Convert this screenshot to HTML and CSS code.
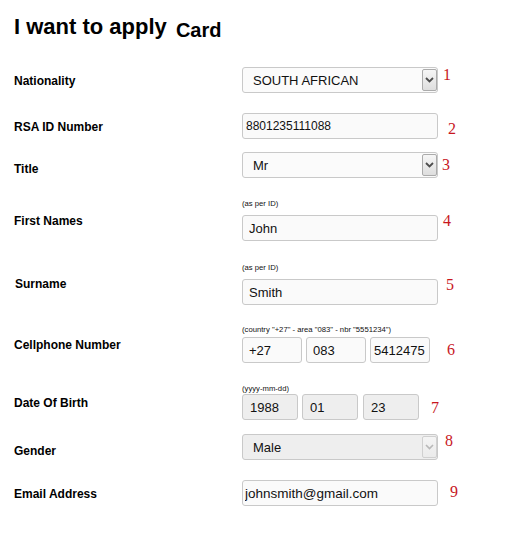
FILE: index.html
```html
<!DOCTYPE html>
<html lang="en">
<head>
<meta charset="utf-8">
<title>I want to apply Card</title>
<link rel="stylesheet" href="styles.css">
</head>
<body>
<div class="page">
  <h1 class="title">I want to apply <span class="sub">Card</span></h1>

  <div class="row r1">
    <div class="label p7">Nationality</div>
    <div class="field">
      <div class="line">
        <div class="select">
          <select class="native"><option>SOUTH AFRICAN</option></select>
          <span class="arrow"><svg width="9" height="6" viewBox="0 0 9 6"><path d="M1 1 L4.5 4.5 L8 1" fill="none" stroke="#4d4d4d" stroke-width="1.8"/></svg></span>
        </div>
        <span class="num n1">1</span>
      </div>
    </div>
  </div>

  <div class="row r2">
    <div class="label p7">RSA ID Number</div>
    <div class="field">
      <div class="line">
        <input class="text wide id" type="text" value="8801235111088">
        <span class="num n2">2</span>
      </div>
    </div>
  </div>

  <div class="row r3">
    <div class="label p10">Title</div>
    <div class="field">
      <div class="line">
        <div class="select">
          <select class="native"><option>Mr</option></select>
          <span class="arrow"><svg width="9" height="6" viewBox="0 0 9 6"><path d="M1 1 L4.5 4.5 L8 1" fill="none" stroke="#4d4d4d" stroke-width="1.8"/></svg></span>
        </div>
        <span class="num n3">3</span>
      </div>
    </div>
  </div>

  <div class="row r4">
    <div class="label p15">First Names</div>
    <div class="field">
      <div class="hint gap6">(as per ID)</div>
      <div class="line">
        <input class="text wide name" type="text" value="John">
        <span class="num n4">4</span>
      </div>
    </div>
  </div>

  <div class="row r5">
    <div class="label p14 shift">Surname</div>
    <div class="field">
      <div class="hint gap6">(as per ID)</div>
      <div class="line">
        <input class="text wide name" type="text" value="Smith">
        <span class="num n5">5</span>
      </div>
    </div>
  </div>

  <div class="row r6">
    <div class="label p13">Cellphone Number</div>
    <div class="field">
      <div class="hint gap2">(country "+27" - area "083" - nbr "5551234")</div>
      <div class="line">
        <div class="group">
          <input class="text part phone" type="text" value="+27">
          <input class="text part phone" type="text" value="083">
          <input class="text part phone last" type="text" value="5412475">
        </div>
        <span class="num n6">6</span>
      </div>
    </div>
  </div>

  <div class="row r7">
    <div class="label p12">Date Of Birth</div>
    <div class="field">
      <div class="hint">(yyyy-mm-dd)</div>
      <div class="line">
        <div class="group">
          <input class="text part date" type="text" value="1988" readonly>
          <input class="text part date" type="text" value="01" readonly>
          <input class="text part date" type="text" value="23" readonly>
        </div>
        <span class="num n7">7</span>
      </div>
    </div>
  </div>

  <div class="row r8">
    <div class="label p10">Gender</div>
    <div class="field">
      <div class="line">
        <div class="select disabled">
          <select class="native" disabled><option>Male</option></select>
          <span class="arrow"><svg width="9" height="6" viewBox="0 0 9 6"><path d="M1 1 L4.5 4.5 L8 1" fill="none" stroke="#b8b8b8" stroke-width="1.6"/></svg></span>
        </div>
        <span class="num n8">8</span>
      </div>
    </div>
  </div>

  <div class="row r9">
    <div class="label p7">Email Address</div>
    <div class="field">
      <div class="line">
        <input class="text wide email" type="text" value="johnsmith@gmail.com">
        <span class="num n9">9</span>
      </div>
    </div>
  </div>
</div>
</body>
</html>
```

FILE: styles.css
```css
html, body {
  margin: 0;
  padding: 0;
  background: #ffffff;
}

.page {
  padding: 14px 0 0 14px;
  font-family: "Liberation Sans", Arial, sans-serif;
  color: #000;
}

.title {
  margin: 0;
  height: 26px;
  font-size: 22px;
  line-height: 26px;
  font-weight: bold;
  white-space: nowrap;
}

.title .sub {
  margin-left: 3px;
  font-size: 20px;
  line-height: 20px;
  vertical-align: -3px;
}

.row {
  display: flex;
  align-items: flex-start;
}

.r1 { margin-top: 27px; }
.r2 { margin-top: 20px; }
.r3 { margin-top: 13px; }
.r4 { margin-top: 21px; }
.r5 { margin-top: 22px; }
.r6 { margin-top: 20px; }
.r7 { margin-top: 21px; }
.r8 { margin-top: 14px; }
.r9 { margin-top: 20px; }

.label {
  flex: none;
  width: 228px;
  font-size: 12px;
  line-height: 14px;
  font-weight: bold;
}

.p7 { padding-top: 7px; }
.p10 { padding-top: 10px; }
.p12 { padding-top: 12px; }
.p13 { padding-top: 13px; }
.p14 { padding-top: 14px; }
.p15 { padding-top: 15px; }
.shift { padding-left: 1px; width: 227px; }

.field {
  display: flex;
  flex-direction: column;
}

.hint {
  font-size: 7.7px;
  line-height: 10px;
  height: 10px;
  white-space: nowrap;
  color: #111;
}

.gap6 { margin-bottom: 6px; }
.gap2 { margin-bottom: 2px; }

.line {
  display: flex;
  align-items: flex-start;
}

.text {
  box-sizing: border-box;
  height: 26px;
  margin: 0;
  border: 1px solid #c9c9c9;
  border-radius: 3px;
  background: #fafafa;
  font-family: "Liberation Sans", Arial, sans-serif;
  font-size: 13px;
  color: #111;
  outline: none;
}

.wide { width: 196px; }
.id { padding: 0 3px; font-size: 12px; }
.name { padding: 0 6px; }
.email { padding: 0 2px; font-size: 13.5px; }

.group {
  display: flex;
  gap: 4px;
}

.part { padding: 0 6px; }
.phone { width: 60px; }
.phone.last { padding: 0 3px; }
.date {
  width: 56px;
  padding: 0 7px;
  background: #eeeeee;
}
.date + .date + .date { margin-left: 1px; }

.select {
  box-sizing: border-box;
  display: flex;
  align-items: stretch;
  width: 196px;
  height: 26px;
  border: 1px solid #c9c9c9;
  border-radius: 3px;
  background: #fbfbfb;
}

.select.disabled {
  background: #eeeeee;
}

.native {
  flex: 1;
  min-width: 0;
  margin: 0;
  padding: 0 0 0 10px;
  border: none;
  background: transparent;
  -webkit-appearance: none;
  appearance: none;
  font-family: "Liberation Sans", Arial, sans-serif;
  font-size: 13px;
  color: #111;
  outline: none;
  opacity: 1;
}

.native:disabled {
  color: #111;
}

.arrow {
  flex: none;
  box-sizing: border-box;
  width: 15px;
  margin: 1px 0 1px 0;
  border: 1px solid #ababab;
  border-radius: 2px;
  background: linear-gradient(#f6f6f6, #dedede);
  display: flex;
  align-items: center;
  justify-content: center;
}

.disabled .arrow {
  border-color: #d0d0d0;
  background: linear-gradient(#f4f4f4, #ebebeb);
}

.num {
  font-family: "Liberation Serif", "Times New Roman", serif;
  font-size: 16px;
  line-height: 16px;
  color: #c8171e;
}

.n1 { margin: 0 0 0 5px; }
.n2 { margin: 8px 0 0 10px; }
.n3 { margin: 5px 0 0 4px; }
.n4 { margin: -2px 0 0 5px; }
.n5 { margin: -2px 0 0 8px; }
.n6 { margin: 5px 0 0 17px; }
.n7 { margin: 6px 0 0 12px; }
.n8 { margin: -1px 0 0 7px; }
.n9 { margin: 4px 0 0 12px; }
```
